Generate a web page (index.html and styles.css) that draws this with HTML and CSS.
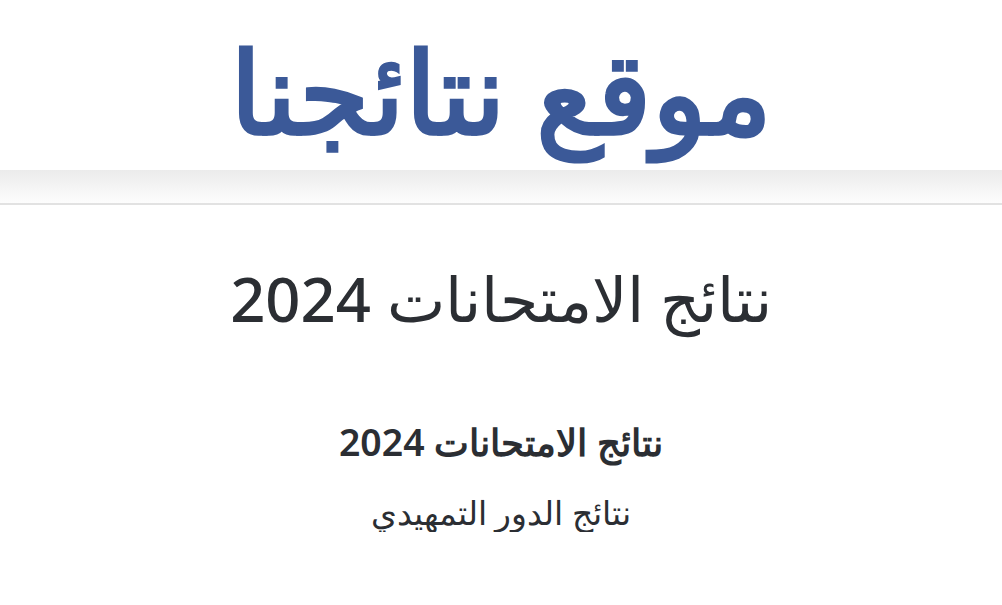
FILE: index.html
```html
<!DOCTYPE html>
<html dir="rtl">
<head>
<meta charset="utf-8">
<link rel="stylesheet" href="styles.css">
</head>
<body>
<header class="site-header">
  <h1 class="logo">موقع نتائجنا</h1>
</header>
<div class="band"></div>
<main class="content">
  <h2 class="page-title">نتائج الامتحانات 2024</h2>
  <section class="links">
    <h3 class="sub-title">نتائج الامتحانات 2024</h3>
    <p class="item">نتائج الدور التمهيدي</p>
  </section>
</main>
</body>
</html>
```
FILE: styles.css
```css
html, body { margin: 0; padding: 0; background: #fff; }
body { font-family: "Noto Sans", sans-serif; color: #2b2e33; }
.site-header { height: 170px; display: flex; align-items: center; justify-content: center; }
.logo { margin: 10px 0 0; font-size: 114px; font-weight: 600; color: #3b5998; line-height: 1; }
.band { height: 33px; background: linear-gradient(#ebebeb, #fdfdfd); border-bottom: 2px solid #e2e2e2; }
.content { text-align: center; }
.page-title { margin: 57px 0 0; font-size: 61.5px; font-weight: 500; line-height: 1.2; }
.links { margin-top: 84px; }
.sub-title { margin: 0; font-size: 37.4px; font-weight: 600; line-height: 1.2; }
.item { margin: 27px 0 0; font-size: 33.4px; font-weight: 400; line-height: 1.2; }
```
